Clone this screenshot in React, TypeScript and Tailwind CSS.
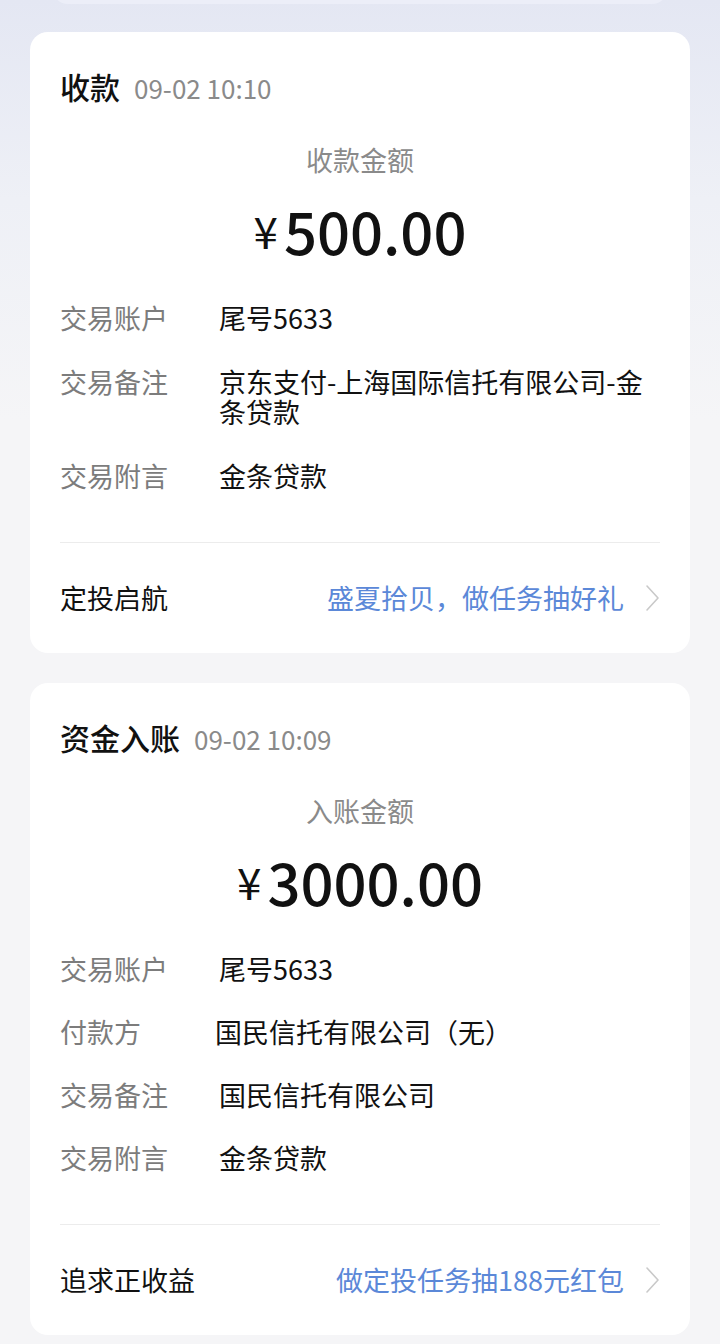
const FONT = '"Noto Sans CJK SC", "Noto Sans", sans-serif'

type Row = { label: string; value: string; valueClass?: string }

type Record = {
  title: string
  time: string
  amountLabel: string
  amount: string
  rows: Row[]
  rowGap: string
  promoTitle: string
  promoText: string
}

const records: Record[] = [
  {
    title: '收款',
    time: '09-02 10:10',
    amountLabel: '收款金额',
    amount: '500.00',
    rows: [
      { label: '交易账户', value: '尾号5633' },
      { label: '交易备注', value: '京东支付-上海国际信托有限公司-金条贷款' },
      { label: '交易附言', value: '金条贷款' },
    ],
    rowGap: 'gap-[34px]',
    promoTitle: '定投启航',
    promoText: '盛夏拾贝，做任务抽好礼',
  },
  {
    title: '资金入账',
    time: '09-02 10:09',
    amountLabel: '入账金额',
    amount: '3000.00',
    rows: [
      { label: '交易账户', value: '尾号5633' },
      { label: '付款方', value: '国民信托有限公司（无）', valueClass: '-ml-[4px]' },
      { label: '交易备注', value: '国民信托有限公司' },
      { label: '交易附言', value: '金条贷款' },
    ],
    rowGap: 'gap-[33px]',
    promoTitle: '追求正收益',
    promoText: '做定投任务抽188元红包',
  },
]

function Chevron(): React.ReactElement {
  return (
    <svg width="16" height="28" viewBox="0 0 16 28" fill="none">
      <path
        d="M3 2 L14 14 L3 26"
        stroke="#c9c9c9"
        strokeWidth="1.6"
        strokeLinecap="round"
        strokeLinejoin="round"
      />
    </svg>
  )
}

function RecordCard({ record }: { record: Record }): React.ReactElement {
  return (
    <div className="mx-[30px] rounded-[18px] bg-white px-[30px] pt-[36px]">
      {/* 标题 + 时间 */}
      <div className="flex items-baseline gap-[14px] leading-[36px]">
        <span className="text-[30px] font-medium text-[#111]">{record.title}</span>
        <span className="text-[26px] text-[#8a8a8a]">{record.time}</span>
      </div>

      {/* 金额 */}
      <div className="mt-[38px] text-center text-[27px] leading-[32px] text-[#8a8a8a]">
        {record.amountLabel}
      </div>
      <div className="mt-[18px] flex h-[72px] items-center justify-center text-[#111]">
        <span className="mr-[6px] text-[44px] leading-none">¥</span>
        <span className="text-[58px] font-medium leading-none">{record.amount}</span>
      </div>

      {/* 明细 */}
      <div className={`mt-[37px] flex flex-col ${record.rowGap}`}>
        {record.rows.map((row) => (
          <div key={row.label} className="flex text-[27px] leading-[30px]">
            <span className="w-[159px] shrink-0 text-[#7c7c7c]">{row.label}</span>
            <span className={`text-[#111] ${row.valueClass ?? ''}`}>{row.value}</span>
          </div>
        ))}
      </div>

      <div className="mt-[51px] h-px bg-[#ececec]" />

      {/* 活动入口 */}
      <div className="flex h-[110px] items-center justify-between">
        <span className="text-[27px] text-[#111]">{record.promoTitle}</span>
        <div className="flex items-center gap-[20px]">
          <span className="text-[27px] text-[#5b88d8]">{record.promoText}</span>
          <Chevron />
        </div>
      </div>
    </div>
  )
}

export default function App(): React.ReactElement {
  return (
    <div
      className="min-h-[1344px] w-[720px] overflow-hidden bg-[linear-gradient(180deg,#e4e7f3_0px,#eef0f6_200px,#f5f5f7_420px)]"
      style={{ fontFamily: FONT }}
    >
      {/* 上一张卡片的底边 */}
      <div className="mx-[52px] -mt-[16px] h-[20px] rounded-b-[16px] bg-[#eceef8]" />
      <div className="flex flex-col gap-[30px] pt-[28px]">
        {records.map((record) => (
          <RecordCard key={record.title} record={record} />
        ))}
      </div>
    </div>
  )
}
